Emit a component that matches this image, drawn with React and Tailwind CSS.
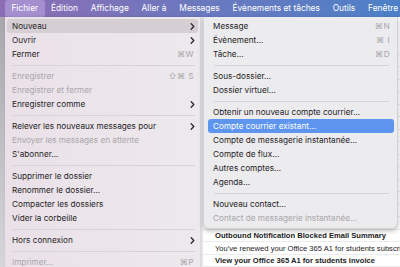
import React from "react";

const font = { fontFamily: "Inter, 'DejaVu Sans', sans-serif" };

const leftItems = [
  { label: "Nouveau", sub: true, active: true },
  { label: "Ouvrir", sub: true },
  { label: "Fermer", sc: "⌘W" },
  "sep",
  { label: "Enregistrer", sc: "⇧⌘ S", off: true },
  { label: "Enregistrer et fermer", off: true },
  { label: "Enregistrer comme", sub: true },
  "sep",
  { label: "Relever les nouveaux messages pour", sub: true },
  { label: "Envoyer les messages en attente", off: true },
  { label: "S'abonner…" },
  "sep",
  { label: "Supprimer le dossier" },
  { label: "Renommer le dossier…" },
  { label: "Compacter les dossiers" },
  { label: "Vider la corbeille" },
  "sep",
  { label: "Hors connexion", sub: true },
  "sep",
  { label: "Imprimer…", sc: "⌘P", off: true },
];

const rightItems = [
  { label: "Message", sc: "⌘N" },
  { label: "Évènement…", sc: "⌘ I" },
  { label: "Tâche…", sc: "⌘D" },
  "sep",
  { label: "Sous-dossier…" },
  { label: "Dossier virtuel…" },
  "sep",
  { label: "Obtenir un nouveau compte courrier…" },
  { label: "Compte courrier existant…", blue: true },
  { label: "Compte de messagerie instantanée…" },
  { label: "Compte de flux…" },
  { label: "Autres comptes…" },
  { label: "Agenda…" },
  "sep",
  { label: "Nouveau contact…" },
  { label: "Contact de messagerie instantanée…", off: true },
];

const topMenus = [
  "Fichier",
  "Édition",
  "Affichage",
  "Aller à",
  "Messages",
  "Évènements et tâches",
  "Outils",
  "Fenêtre",
];

// rows hidden behind the submenu are left blank
const mails = [
  ...Array(15).fill({ text: "", bold: false }),
  { text: "Outbound Notification Blocked Email Summary", bold: true },
  { text: "You've renewed your Office 365 A1 for students subscription", bold: false },
  { text: "View your Office 365 A1 for students invoice", bold: true },
];

function Chevron({ white }) {
  return (
    <svg width="5" height="7" viewBox="0 0 5 7" className="shrink-0">
      <path
        d="M1.2 0.8 L3.8 3.5 L1.2 6.2"
        fill="none"
        stroke={white ? "#fff" : "#2a2a2a"}
        strokeWidth="1.3"
        strokeLinecap="round"
        strokeLinejoin="round"
      />
    </svg>
  );
}

function MenuList({ items, sepClass }) {
  return items.map((item, i) => {
    if (item === "sep") {
      return (
        <div key={i} className="h-[8px] flex items-center">
          <div className={`h-px flex-1 bg-[#d8d3d7] ${sepClass}`} />
        </div>
      );
    }
    let tone = "text-[#262427]";
    if (item.off) tone = "text-[#aaa6aa]";
    if (item.active) tone = "bg-[#d5cfd4] text-[#262427]";
    if (item.blue) tone = "bg-[#5d95ef] text-white";
    return (
      <div
        key={i}
        className={`h-[14px] flex items-center justify-between rounded-[3px] pl-[5px] pr-[3px] text-[8.2px] leading-none ${tone}`}
      >
        <span className="whitespace-nowrap">{item.label}</span>
        {item.sub && <Chevron white={item.blue} />}
        {item.sc && (
          <span className="whitespace-pre text-[#a8a5a9] text-[8.2px] tracking-[0.4px] pr-[1px]">{item.sc}</span>
        )}
      </div>
    );
  });
}

export default function App() {
  return (
    <div className="w-[400px] h-[267px] overflow-hidden bg-white" style={font}>
      {/* menu bar */}
      <div className="h-[17px] flex items-center pl-[5px] bg-gradient-to-r from-[#8c6db4] via-[#6b78bf] to-[#4b80c7] text-white text-[8.4px] leading-none">
        {topMenus.map((m, i) => (
          <div
            key={m}
            className={`h-[17px] flex items-center px-[6.4px] whitespace-nowrap rounded-[3px] ${
              i === 0 ? "bg-[#a58fcf]" : ""
            }`}
          >
            {m}
          </div>
        ))}
      </div>

      <div className="relative h-[250px] flex">
        {/* window behind the menus */}
        <div className="w-[5px] bg-gradient-to-b from-[#aaa7ac] to-[#d9d6da]" />
        <div className="w-[198px] bg-[#f1eff2]" />
        <div className="flex-1 flex flex-col justify-end overflow-hidden bg-white">
          {mails.map((m, i) => (
            <div
              key={i}
              className={`h-[12.5px] shrink-0 flex items-center pt-[2px] pl-[12px] whitespace-nowrap text-[7.6px] leading-none text-[#1c1c1c] border-b border-[#ececec] ${
                m.bold ? "font-bold" : ""
              }`}
              style={{ fontFamily: "'Liberation Sans', Arial, sans-serif" }}
            >
              {m.text}
            </div>
          ))}
        </div>

        {/* Fichier menu */}
        <div className="absolute left-[5px] top-0 w-[195px] h-[260px] px-[2px] pt-[2px] bg-gradient-to-r from-[#eae1e8] to-[#ede9ec] shadow-[1px_0_3px_rgba(0,0,0,0.15)]">
          <MenuList items={leftItems} sepClass="ml-[5px] mr-[3px]" />
        </div>

        {/* Nouveau submenu */}
        <div className="absolute left-[203px] top-0 w-[195px] pl-[4px] pr-[3px] pt-[2px] pb-[3px] bg-[#ecebed] rounded-b-[6px] border border-t-0 border-[#d4d2d5] shadow-[0_2px_5px_rgba(0,0,0,0.25)]">
          <MenuList items={rightItems} sepClass="ml-[6px] mr-[5px]" />
        </div>
      </div>
    </div>
  );
}
